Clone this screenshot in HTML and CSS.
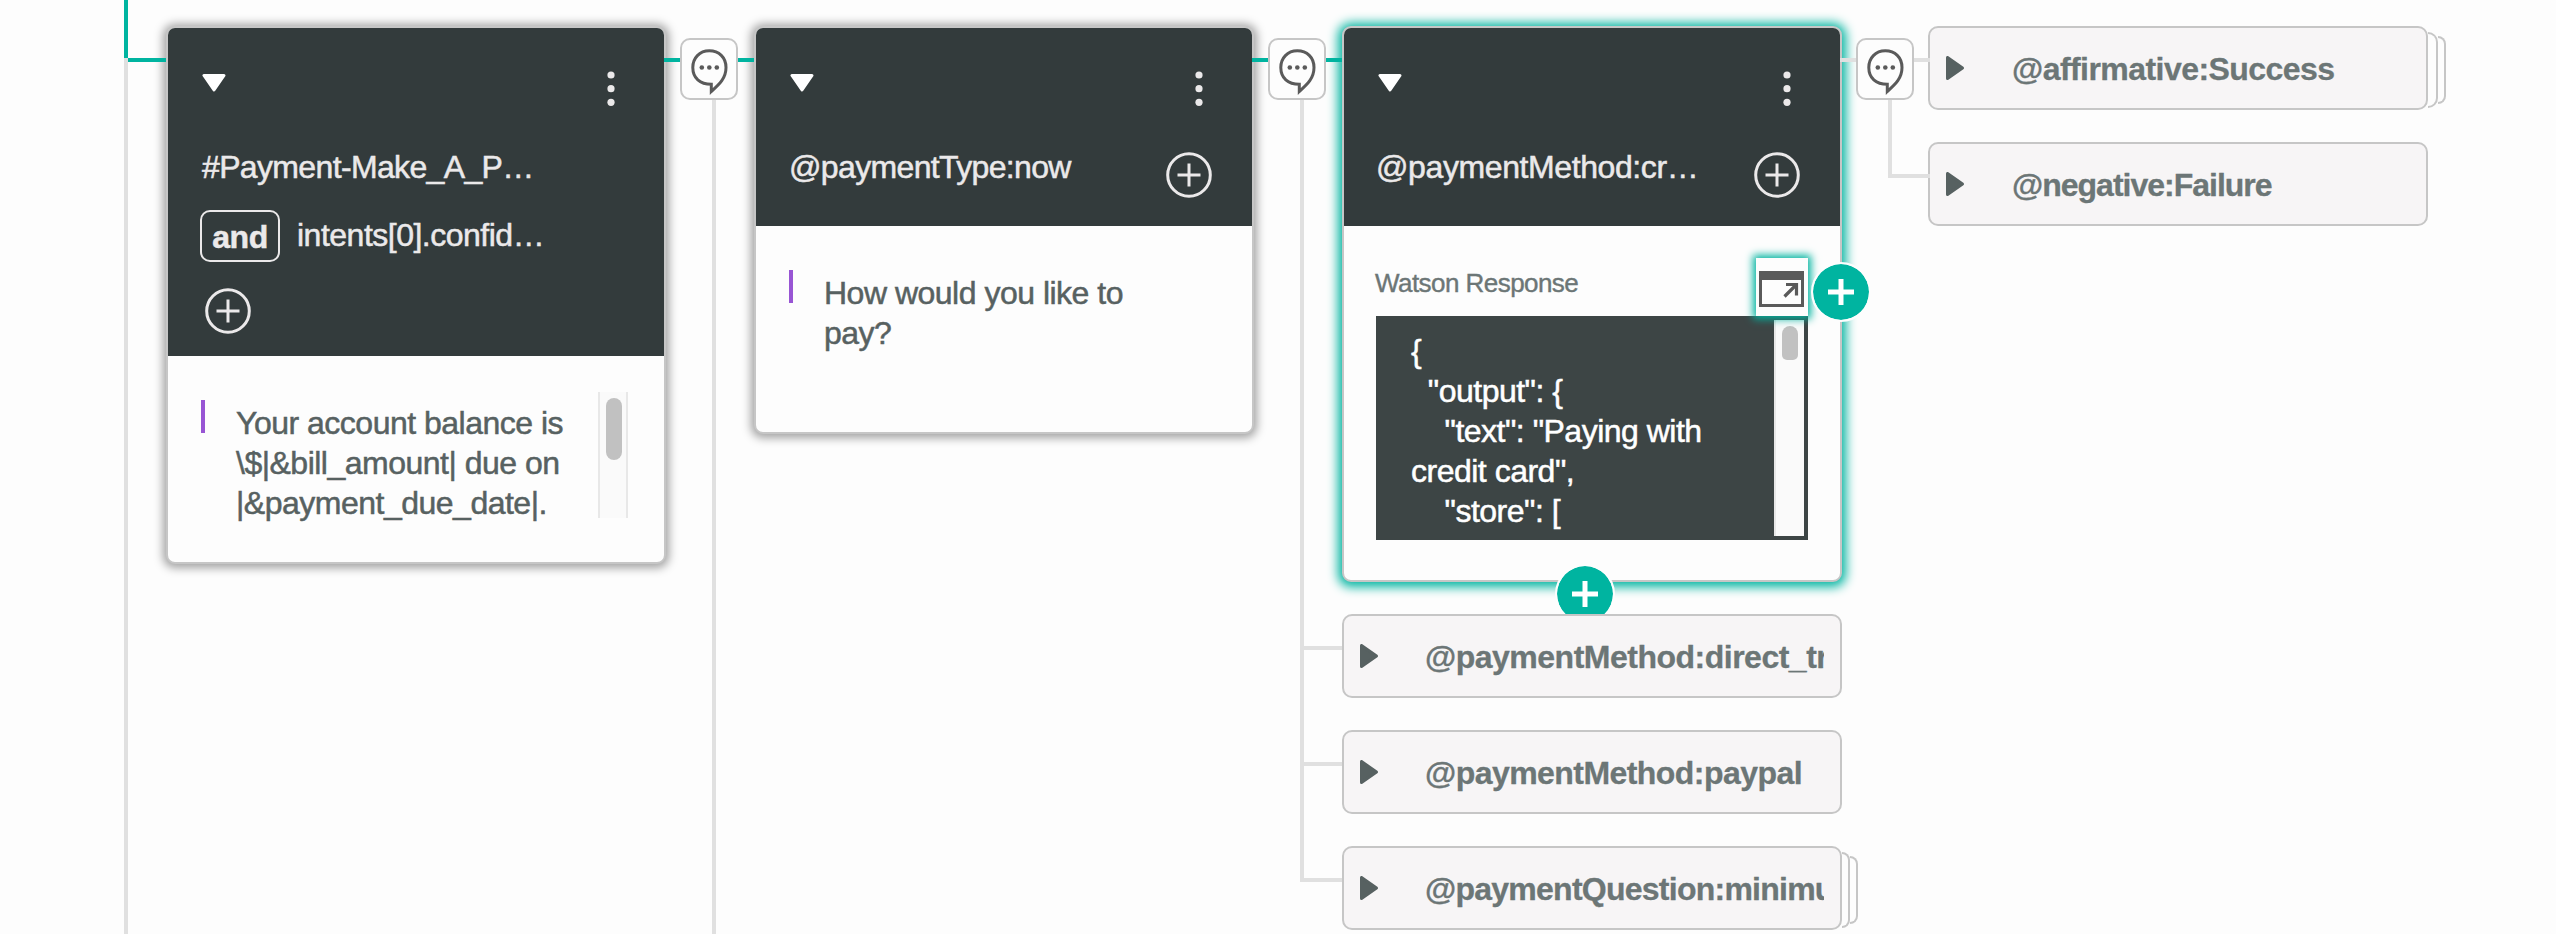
FILE: index.html
```html
<!DOCTYPE html>
<html lang="en">
<head>
<meta charset="utf-8">
<title>Dialog tree</title>
<link rel="stylesheet" href="styles.css">
</head>
<body>
<svg width="0" height="0" class="defs">
  <defs>
    <symbol id="bubble" viewBox="0 0 54 58">
      <path d="M44 27.500C44 17.500 37 10.800 27.300 10.800C17.500 10.800 10.800 18 10.800 27.500C10.800 38 18 44.300 29.300 44.300V51.500C37 44.500 44 38.500 44 27.500Z" fill="none" stroke="#5a5a5a" stroke-width="3"/>
      <circle cx="19.800" cy="27.500" r="2.300" fill="#5a5a5a"/><circle cx="27.300" cy="27.500" r="2.300" fill="#5a5a5a"/><circle cx="34.800" cy="27.500" r="2.300" fill="#5a5a5a"/>
    </symbol>
    <symbol id="down" viewBox="0 0 24 18"><path d="M2 1.500H22L12 16Z" fill="#fff" stroke="#fff" stroke-width="3" stroke-linejoin="round"/></symbol>
    <symbol id="right" viewBox="0 0 18 24"><path d="M1.500 1.500V22.500L16.500 12Z" fill="#576161" stroke="#576161" stroke-width="3" stroke-linejoin="round"/></symbol>
    <symbol id="dots" viewBox="0 0 8 36"><circle cx="4" cy="4" r="3.600"/><circle cx="4" cy="17.700" r="3.600"/><circle cx="4" cy="31.300" r="3.600"/></symbol>
    <symbol id="add" viewBox="0 0 46 46"><circle cx="23" cy="23" r="21.300" fill="none" stroke="#ebe9ea" stroke-width="3"/><path d="M11.500 23H34.500M23 11.500V34.500" stroke="#ebe9ea" stroke-width="3"/></symbol>
    <symbol id="plus" viewBox="0 0 56 56"><circle cx="28" cy="28" r="28" fill="#00b4a0"/><path d="M15 28H41M28 15V41" stroke="#fff" stroke-width="5"/></symbol>
  </defs>
</svg>
<main class="tree">
  <section class="column">
    <article class="card card-intent">
      <header class="head">
        <div class="tools"><svg class="down"><use href="#down"/></svg><svg class="dots"><use href="#dots"/></svg></div>
        <div class="condition"><span class="intent">#Payment-Make_A_P…</span></div>
        <div class="condition joined"><b class="and">and</b><span class="confidence">intents[0].confid…</span></div>
        <svg class="add below"><use href="#add"/></svg>
      </header>
      <div class="body">
        <i class="mark"></i>
        <p class="say">Your account balance is<br>\$|&amp;bill_amount| due on<br>|&amp;payment_due_date|.</p>
        <div class="scroll"><i class="thumb"></i></div>
      </div>
    </article>
  </section>
  <section class="column">
    <article class="card card-type">
      <header class="head">
        <div class="tools"><svg class="down"><use href="#down"/></svg><svg class="dots"><use href="#dots"/></svg></div>
        <div class="condition"><span class="type">@paymentType:now</span><svg class="add"><use href="#add"/></svg></div>
      </header>
      <div class="body"><i class="mark"></i><p class="say">How would you like to<br>pay?</p></div>
    </article>
  </section>
  <section class="column">
    <article class="card card-method">
      <header class="head">
        <div class="tools"><svg class="down"><use href="#down"/></svg><svg class="dots"><use href="#dots"/></svg></div>
        <div class="condition"><span class="method">@paymentMethod:cr…</span><svg class="add"><use href="#add"/></svg></div>
      </header>
      <div class="response">
        <div class="response-bar">
          <span class="label">Watson Response</span>
          <span class="expand"><svg width="46" height="36" viewBox="0 0 46 36"><rect x="1.500" y="1.500" width="42" height="33" fill="none" stroke="#5a5a5a" stroke-width="3"/><path d="M0 0H45V9H0Z" fill="#5a5a5a"/><path d="M25.500 25.500L37 14M27 13.500H37.500V24.500" fill="none" stroke="#5a5a5a" stroke-width="3.200"/></svg></span>
        </div>
        <div class="code">
          <pre class="json">{
  "output": {
    "text": "Paying with
credit card",
    "store": [</pre>
          <div class="scroll-code"><i class="thumb"></i></div>
        </div>
      </div>
      <svg class="plus plus-side"><use href="#plus"/></svg>
      <svg class="plus plus-below"><use href="#plus"/></svg>
    </article>
    <div class="node"><svg class="right"><use href="#right"/></svg><span class="name direct">@paymentMethod:direct_transfer</span></div>
    <div class="node"><svg class="right"><use href="#right"/></svg><span class="name">@paymentMethod:paypal</span></div>
    <div class="node stack"><svg class="right"><use href="#right"/></svg><span class="name question">@paymentQuestion:minimum</span></div>
  </section>
  <section class="column results">
    <div class="node stack"><svg class="right"><use href="#right"/></svg><span class="name">@affirmative:Success</span></div>
    <div class="node"><svg class="right"><use href="#right"/></svg><span class="name failure">@negative:Failure</span></div>
  </section>
  <svg class="links" width="2556" height="934" fill="none" stroke-width="4">
    <path d="M126 58V934M714 100V934M1302 100V880H1342M1302 648H1342M1302 764H1342M1840 60H1930M1890 100V176H1930" stroke="#e0e0e0"/>
    <path d="M126 0V58M128 60H166M664 60H754M1252 60H1342" stroke="#00b4a0"/>
  </svg>
  <span class="jump jump-1"><svg><use href="#bubble"/></svg></span>
  <span class="jump jump-2"><svg><use href="#bubble"/></svg></span>
  <span class="jump jump-3"><svg><use href="#bubble"/></svg></span>
</main>
</body>
</html>
```
FILE: styles.css
```css
*, *::before, *::after { box-sizing: border-box; }
body { margin: 0; background: #fdfdfd; font-family: "Liberation Sans", Arial, sans-serif; font-size: 32px; line-height: 40px; }
svg { display: block; flex: none; }
.defs { position: absolute; }
.tree { position: relative; width: 2556px; height: 934px; overflow: hidden; display: flex; align-items: flex-start; gap: 88px; padding: 26px 0 0 166px; }
.column { width: 500px; flex: none; display: flex; flex-direction: column; gap: 32px; }
.results { margin-left: -2px; }
.card { position: relative; border: 2px solid #c6c6c6; border-radius: 9px; background: #fdfdfd; box-shadow: 0 1px 10px 3px rgba(0,0,0,.36); }
.card-intent { height: 538px; }
.card-type { height: 408px; }
.card-method { height: 556px; box-shadow: 0 1px 11px 4px #00b4a0; }
.head { height: 198px; padding: 43px 40px 0 34px; border-radius: 7px 7px 0 0; background: #333b3c; color: #ebe9ea; -webkit-text-stroke: .5px; }
.card-intent .head { height: 328px; }
.tools { display: flex; justify-content: space-between; padding-right: 9px; height: 78px; }
.down { width: 24px; height: 18px; margin-top: 3px; }
.dots { width: 8px; height: 36px; fill: #ebe9ea; }
.condition { height: 52px; display: flex; justify-content: space-between; white-space: nowrap; }
.condition span { margin-top: -2px; }
.intent { letter-spacing: -.65px; }
.confidence { letter-spacing: -.5px; }
.type { letter-spacing: -.65px; margin-left: -1px; }
.method { letter-spacing: -.4px; margin-left: -2px; }
.add { width: 46px; height: 46px; margin-top: 3px; }
.joined { justify-content: flex-start; margin: 9px 0 0 -2px; gap: 17px; align-items: flex-start; line-height: 50px; }
.joined span { margin-top: 0; }
.and { width: 80px; height: 52px; border: 2px solid #ebe9ea; border-radius: 10px; text-align: center; line-height: 50px; letter-spacing: -.5px; }
.below { margin: 26px 0 0 3px; }
.body { display: flex; padding: 44px 0 0 33px; color: #576161; -webkit-text-stroke: .5px; }
.mark { width: 4px; height: 33px; flex: none; background: #9855d4; }
.say { margin: 3px 0 0 31px; width: 362px; letter-spacing: -.5px; white-space: nowrap; }
.scroll { width: 30px; height: 126px; margin-top: -8px; border: solid #e8e8e8; border-width: 0 2px; background: #fafafa; padding: 6px; }
.thumb { display: block; width: 16px; height: 62px; border-radius: 8px; background: #c1c1c1; }
.response { padding: 30px 32px 0; }
.response-bar { display: flex; justify-content: space-between; height: 60px; }
.label { font-size: 26px; line-height: 54px; margin-left: -1px; color: #6c7676; letter-spacing: -.55px; -webkit-text-stroke: .4px; }
.expand { position: relative; z-index: 1; width: 52px; height: 58px; margin-top: 2px; background: #fdfdfd; padding: 13px 3px; box-shadow: 0 0 8px 3px #00b4a0; }
.code { height: 224px; background: #3d4545; color: #fff; display: flex; justify-content: space-between; padding: 4px 4px 4px 35px; -webkit-text-stroke: .5px; }
.json { margin: 11px 0 0; font: inherit; letter-spacing: -.5px; }
.scroll-code { width: 30px; background: #fafafa; border-left: 2px solid #e8e8e8; padding: 6px; }
.scroll-code .thumb { height: 34px; border-radius: 8px 8px 5px 5px; }
.plus { position: absolute; width: 60px; height: 60px; border: 2px solid #fdfdfd; border-radius: 50%; background: #fdfdfd; z-index: 2; }
.plus-side { left: 466.5px; top: 234px; }
.plus-below { left: 210.5px; top: 536px; z-index: 0; }
.node { position: relative; height: 84px; flex: none; border: 2px solid #c6c6c6; border-radius: 10px; background: #f7f5f6; display: flex; align-items: center; padding: 0 16px; color: #6c7676; }
.right { width: 18px; height: 24px; }
.name { margin: 2px 0 0 47px; width: 399px; flex: none; overflow: hidden; white-space: nowrap; font-weight: bold; letter-spacing: -.55px; -webkit-text-stroke: .3px; }
.direct { letter-spacing: -.5px; }
.question { letter-spacing: -.75px; }
.failure { letter-spacing: -1px; }
.results .name { margin-left: 48px; }
.stack::before, .stack::after { content: ""; position: absolute; border: 2px solid #c6c6c6; border-left: 0; border-radius: 0 10px 10px 0; }
.stack::before { left: 498px; top: 4px; width: 8px; height: 76px; }
.stack::after { left: 506px; top: 8px; width: 8px; height: 68px; }
.results .stack::before { width: 10px; }
.results .stack::after { left: 508px; }
.links { position: absolute; left: 0; top: 0; }
.jump { position: absolute; top: 38px; width: 58px; height: 62px; border: 2px solid #c6c6c6; border-radius: 10px; background: #fdfdfd; }
.jump svg { width: 54px; height: 58px; }
.jump-1 { left: 680px; }
.jump-2 { left: 1268px; }
.jump-3 { left: 1856px; }
```
